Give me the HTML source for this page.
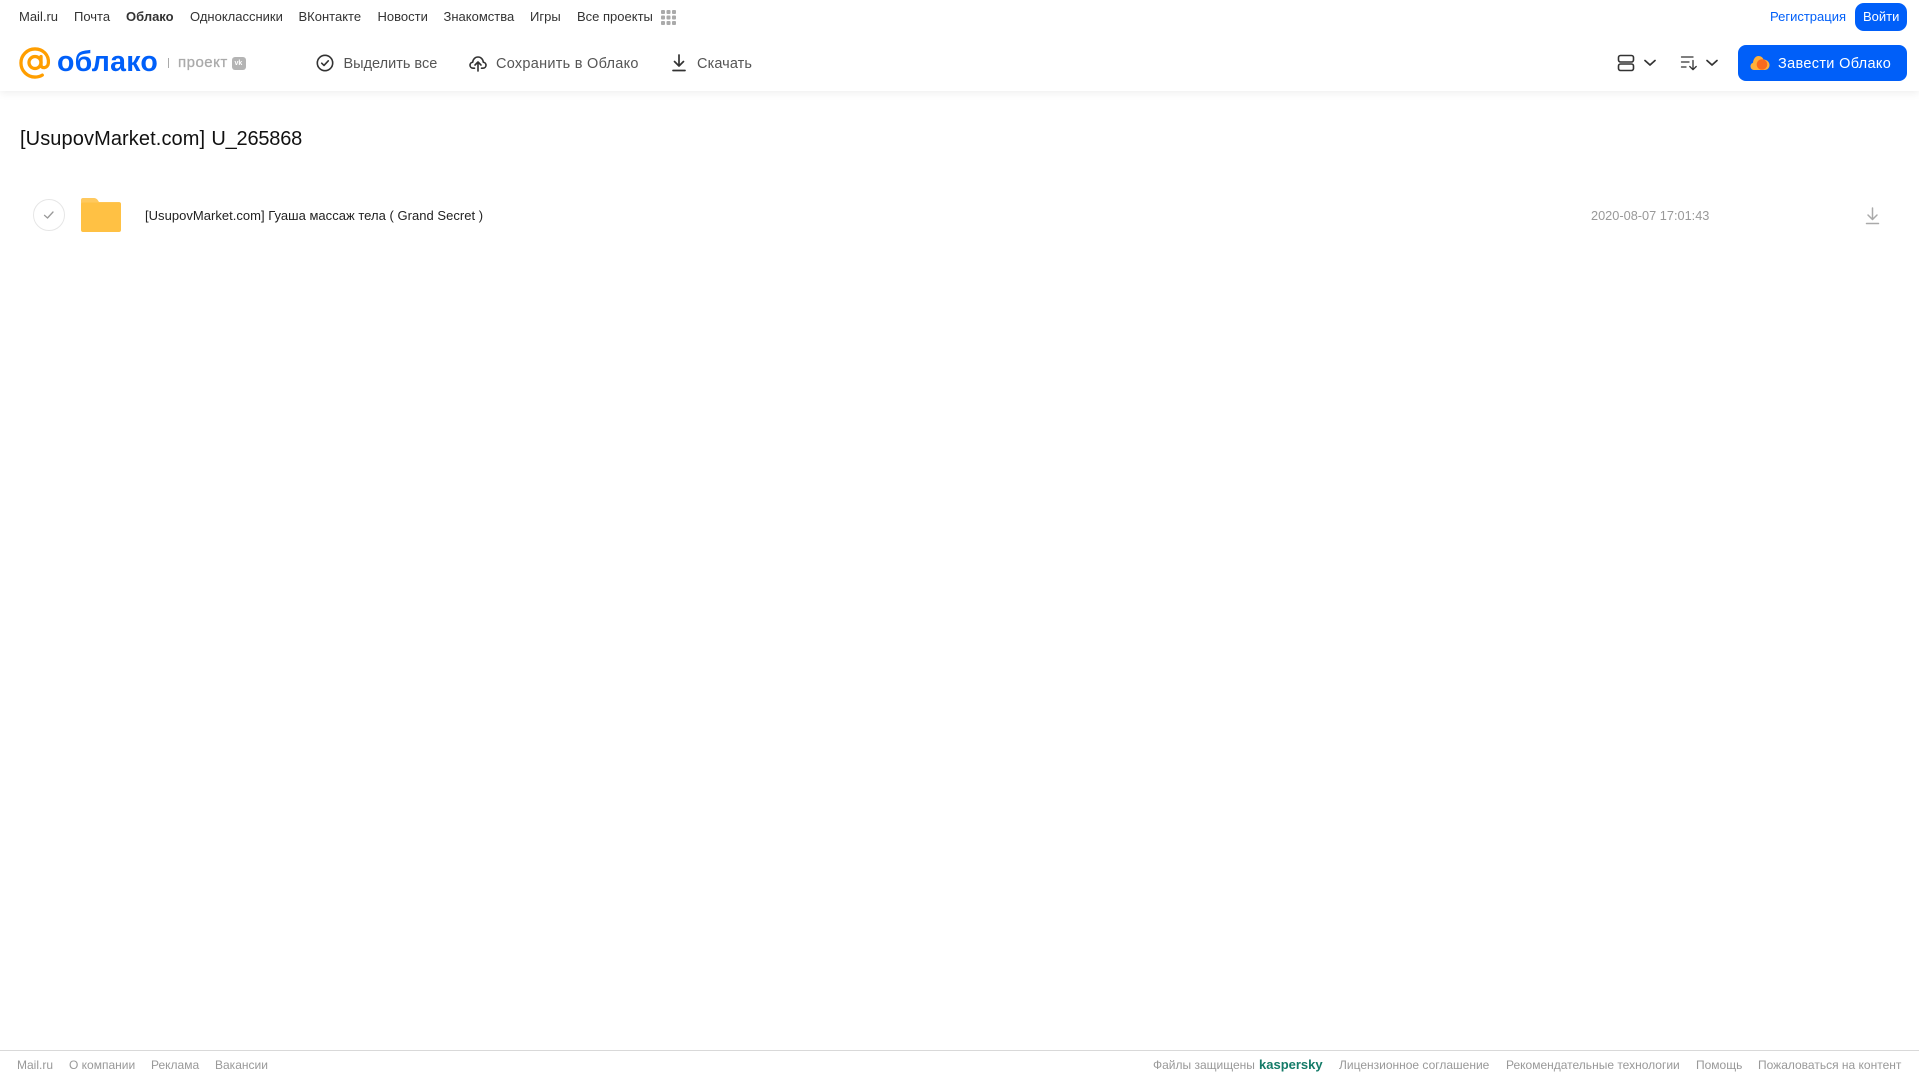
<!DOCTYPE html>
<html lang="ru">
<head>
<meta charset="utf-8">
<title>Облако</title>
<style>
html,body{margin:0;padding:0;background:#fff;width:1919px;height:1079px;overflow:hidden}
body{position:relative;font-family:"Liberation Sans","DejaVu Sans",sans-serif}
.t{position:absolute;white-space:nowrap;line-height:20px;height:20px}
.n{font-size:13px;color:#333;top:7px}
.a{font-size:14.5px;color:#555;top:53.5px}
.f{font-size:12px;color:#999;top:1055px}
svg{position:absolute;overflow:visible}
</style>
</head>
<body>
<div style="position:absolute;left:0;top:0;width:1919px;height:91px;background:#fff;box-shadow:0 2px 8px rgba(0,0,0,.07)"></div>

<span class="t n" style="left:19px">Mail.ru</span>
<span class="t n" style="left:74px">Почта</span>
<span class="t n" style="left:126px;font-weight:bold">Облако</span>
<span class="t n" style="left:190px">Одноклассники</span>
<span class="t n" style="left:298.500px">ВКонтакте</span>
<span class="t n" style="left:377.500px">Новости</span>
<span class="t n" style="left:443.500px">Знакомства</span>
<span class="t n" style="left:530px">Игры</span>
<span class="t n" style="left:577px">Все проекты</span>
<svg style="left:661px;top:10px" width="15" height="15" viewBox="0 0 15 15" fill="#aaa"><rect x="0" y="0" width="4" height="4" rx="1"/><rect x="5.5" y="0" width="4" height="4" rx="1"/><rect x="11" y="0" width="4" height="4" rx="1"/><rect x="0" y="5.5" width="4" height="4" rx="1"/><rect x="5.5" y="5.5" width="4" height="4" rx="1"/><rect x="11" y="5.5" width="4" height="4" rx="1"/><rect x="0" y="11" width="4" height="4" rx="1"/><rect x="5.5" y="11" width="4" height="4" rx="1"/><rect x="11" y="11" width="4" height="4" rx="1"/></svg>

<span class="t n" style="left:1770px;color:#005ff9">Регистрация</span>
<div style="position:absolute;left:1855px;top:3px;width:52px;height:28px;border-radius:9px;background:#005ff9"></div>
<span class="t n" style="left:1863px;color:#fff">Войти</span>

<svg style="left:19px;top:47px" width="32" height="32" viewBox="0 0 33 33" fill="none" stroke="#ff9e00" stroke-width="3.4" stroke-linecap="round"><circle cx="16.5" cy="16" r="6.2"/><path d="M22.700 9.800V18.500C22.700 22.500 29.800 22.500 30.300 16.500C31 8 24.500 2 16.500 2C8.500 2 2 8.500 2 16.500C2 24.500 8.500 31 16.500 31C19.500 31 22 30.200 24 29"/></svg>
<span class="t" style="left:57px;top:46px;height:32px;line-height:32px;font-size:28.500px;letter-spacing:.25px;font-weight:bold;color:#005ff9">облако</span>
<div style="position:absolute;left:168px;top:58px;width:1px;height:10px;background:#aaa"></div>
<span class="t" style="left:178px;top:53px;font-size:15px;letter-spacing:.5px;color:#aaa;-webkit-text-stroke:.3px #aaa">проект</span>
<div style="position:absolute;left:232px;top:57px;width:14px;height:13px;border-radius:3px;background:#b4b4b4"></div>
<span class="t" style="left:234.500px;top:53.500px;font-size:7px;font-weight:bold;color:#fff">vk</span>

<svg style="left:316px;top:54px" width="18" height="18" viewBox="0 0 18 18" fill="none" stroke="#333" stroke-width="1.6" stroke-linecap="round" stroke-linejoin="round"><circle cx="9" cy="9" r="7.7"/><path d="M5.700 9.200L8 11.400L12.300 6.800"/></svg>
<span class="t a" style="left:343.500px">Выделить все</span>

<svg style="left:469px;top:54px" width="18" height="18" viewBox="0 0 18 18" fill="none" stroke="#333" stroke-width="1.6" stroke-linecap="round" stroke-linejoin="round"><path d="M5.500 14.200H4.200C2.300 14.200 1 12.800 1 11.200C1 9.500 2.200 8.400 3.700 8.200C4 5 6.300 3 9 3C11.700 3 14 5 14.300 8.200C15.800 8.400 17 9.500 17 11.200C17 12.800 15.700 14.200 13.800 14.200H12.500"/><path d="M9 17V8.500M6 11L9 8L12 11"/></svg>
<span class="t a" style="left:496px;letter-spacing:.27px">Сохранить в Облако</span>

<svg style="left:671px;top:54px" width="16" height="18" viewBox="0 0 16 18" fill="none" stroke="#333" stroke-width="1.7" stroke-linecap="round" stroke-linejoin="round"><path d="M8 1V12M3.500 7.500L8 12L12.500 7.500"/><path d="M2 16.500H14"/></svg>
<span class="t a" style="left:697px;letter-spacing:.1px">Скачать</span>

<svg style="left:1617px;top:54px" width="18" height="18" viewBox="0 0 18 18" fill="none" stroke="#333" stroke-width="1.6"><rect x="1.500" y="1.500" width="15" height="6.500" rx="2"/><rect x="1.500" y="10" width="15" height="6.500" rx="2"/></svg>
<svg style="left:1643px;top:59px" width="14" height="8" viewBox="0 0 14 8" fill="none" stroke="#333" stroke-width="1.7" stroke-linecap="round" stroke-linejoin="round"><path d="M2 1.500L7 6L12 1.500"/></svg>
<svg style="left:1680px;top:54px" width="18" height="18" viewBox="0 0 18 18" fill="none" stroke="#333" stroke-width="1.300" stroke-linecap="round" stroke-linejoin="round"><path d="M1.500 3H13M1.500 8H9M1.500 13H6"/><path d="M13 6.500V15.500M9.800 12.500L13 15.700L16.200 12.500"/></svg>
<svg style="left:1705px;top:59px" width="14" height="8" viewBox="0 0 14 8" fill="none" stroke="#333" stroke-width="1.7" stroke-linecap="round" stroke-linejoin="round"><path d="M2 1.500L7 6L12 1.500"/></svg>

<div style="position:absolute;left:1738px;top:45px;width:169px;height:36px;border-radius:8px;background:#005ff9"></div>
<svg style="left:1750px;top:54px" width="20" height="18" viewBox="0 0 20 18"><path fill="#ffb03a" d="M4 16C1.800 16 .5 14.300 .5 12.300C.5 10.500 1.700 9.200 3 8.800C3.300 5 5.500 2 8.500 2C11 2 12.800 3.500 13.500 5.500C16.800 5.500 19.500 8 19.500 11C19.500 14 17.300 16 14.500 16Z"/><circle cx="12" cy="10.500" r="5.300" fill="#f96a1e"/></svg>
<span class="t a" style="left:1778px;color:#fff;letter-spacing:.33px">Завести Облако</span>

<span class="t" style="left:20px;top:127px;height:24px;line-height:24px;font-size:20px;color:#111"><span style="letter-spacing:.1px">[UsupovMarket.com]</span> <span style="letter-spacing:-.2px;margin-left:.6px">U_265868</span></span>

<div style="position:absolute;left:33px;top:199px;width:30px;height:30px;border:1px solid #e6e6e6;border-radius:50%"></div>
<svg style="left:43px;top:209px" width="12" height="12" viewBox="0 0 12 12" fill="none" stroke="#999" stroke-width="1.300" stroke-linecap="round" stroke-linejoin="round"><path d="M1.500 6.300L4.500 9L10 3"/></svg>

<svg style="left:81px;top:198px" width="40" height="34" viewBox="0 0 40 34"><path fill="#ffc95e" d="M2 0H13C14.500 0 15.500 .6 16.500 1.800L18 4H38C39.200 4 40 4.800 40 6V10H0V2C0 .8 .8 0 2 0Z"/><path fill="#ffc144" d="M2 4.500H38C39.200 4.500 40 5.300 40 6.500V32C40 33.200 39.200 34 38 34H2C.8 34 0 33.200 0 32V6.500C0 5.300 .8 4.500 2 4.500Z"/></svg>

<span class="t" style="left:145px;top:206px;font-size:13px;letter-spacing:.025px;color:#222">[UsupovMarket.com] Гуаша массаж тела ( Grand Secret )</span>
<span class="t" style="left:1591px;top:206px;font-size:12.750px;color:#999">2020-08-07 17:01:43</span>
<svg style="left:1865px;top:206.500px" width="15" height="18" viewBox="0 0 15 18" fill="none" stroke="#aaa" stroke-width="1.500" stroke-linecap="round" stroke-linejoin="round"><path d="M7.500 1V12M3 8L7.500 12.500L12 8"/><path d="M1.500 16.500H13.500"/></svg>

<div style="position:absolute;left:0;top:1050px;width:1919px;height:1px;background:#d9d9d9"></div>
<span class="t f" style="left:17px">Mail.ru</span>
<span class="t f" style="left:69px">О компании</span>
<span class="t f" style="left:151px">Реклама</span>
<span class="t f" style="left:215px">Вакансии</span>
<span class="t f" style="left:1153px">Файлы защищены</span>
<span class="t" style="left:1259px;top:1055px;font-size:13px;font-weight:bold;color:#147b68">kaspersky</span>
<span class="t f" style="left:1339px">Лицензионное соглашение</span>
<span class="t f" style="left:1506px">Рекомендательные технологии</span>
<span class="t f" style="left:1696px">Помощь</span>
<span class="t f" style="left:1758px">Пожаловаться на контент</span>
</body>
</html>
